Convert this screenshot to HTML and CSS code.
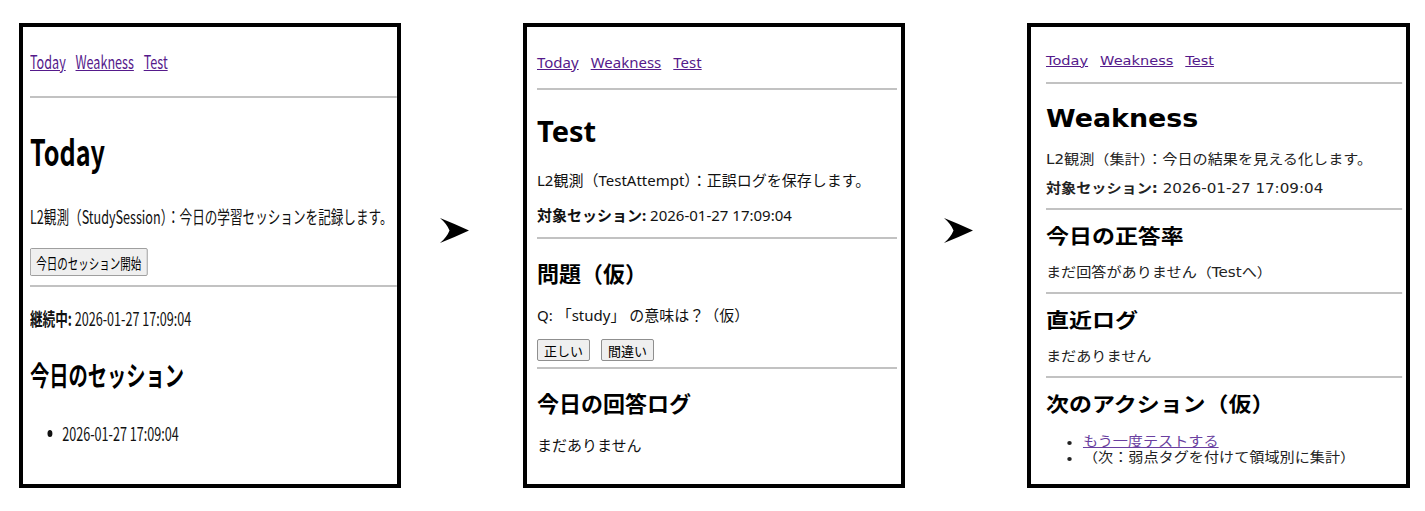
FILE: index.html
```html
<!DOCTYPE html>
<html lang="ja">
<head>
<meta charset="utf-8">
<title>L2観測</title>
<link rel="stylesheet" href="styles.css">
</head>
<body>
<div class="flow">
  <section class="panel panel-today">
    <div class="page page-today">
      <nav class="nav"><a href="#">Today</a><a href="#">Weakness</a><a href="#">Test</a></nav>
      <hr>
      <h1>Today</h1>
      <p>L2観測（StudySession）：今日の学習セッションを記録します。</p>
      <div class="actions"><button class="btn" type="button">今日のセッション開始</button></div>
      <hr>
      <p><strong>継続中:</strong> 2026-01-27 17:09:04</p>
      <h2>今日のセッション</h2>
      <ul class="list"><li>2026-01-27 17:09:04</li></ul>
    </div>
  </section>

  <div class="arrow">
    <svg viewBox="0 0 29 25" aria-hidden="true"><path d="M0 0 Q15 6 29 12.5 Q15 19 0 25 Q7 19 9.5 12.5 Q7 6 0 0 Z" fill="#000"/></svg>
  </div>

  <section class="panel panel-test">
    <div class="page page-test">
      <nav class="nav"><a href="#">Today</a><a href="#">Weakness</a><a href="#">Test</a></nav>
      <hr>
      <h1>Test</h1>
      <p>L2観測（TestAttempt）：正誤ログを保存します。</p>
      <p><strong>対象セッション:</strong> 2026-01-27 17:09:04</p>
      <hr>
      <h2>問題（仮）</h2>
      <p>Q: 「study」 の意味は？（仮）</p>
      <div class="actions"><button class="btn" type="button">正しい</button><button class="btn" type="button">間違い</button></div>
      <hr>
      <h2>今日の回答ログ</h2>
      <p>まだありません</p>
    </div>
  </section>

  <div class="arrow">
    <svg viewBox="0 0 29 25" aria-hidden="true"><path d="M0 0 Q15 6 29 12.5 Q15 19 0 25 Q7 19 9.5 12.5 Q7 6 0 0 Z" fill="#000"/></svg>
  </div>

  <section class="panel panel-weak">
    <div class="page page-weak">
      <nav class="nav"><a href="#">Today</a><a href="#">Weakness</a><a href="#">Test</a></nav>
      <hr>
      <h1>Weakness</h1>
      <p>L2観測（集計）：今日の結果を見える化します。</p>
      <p><strong>対象セッション:</strong> 2026-01-27 17:09:04</p>
      <hr>
      <h2>今日の正答率</h2>
      <p>まだ回答がありません（Testへ）</p>
      <hr>
      <h2>直近ログ</h2>
      <p>まだありません</p>
      <hr>
      <h2>次のアクション（仮）</h2>
      <ul class="list"><li><a href="#">もう一度テストする</a></li><li>（次：弱点タグを付けて領域別に集計）</li></ul>
    </div>
  </section>
</div>
</body>
</html>
```

FILE: styles.css
```css
* { box-sizing: border-box; }

html, body {
  margin: 0;
  background: #fff;
}

body {
  font-family: "Noto Sans", "Noto Sans CJK JP", sans-serif;
  color: #111;
}

.flow {
  display: flex;
  align-items: flex-start;
  padding: 23px 0 0 19px;
}

.panel {
  flex: none;
  width: 382px;
  height: 465px;
  border: 4px solid #000;
  overflow: hidden;
  background: #fff;
}

.panel-today { padding-left: 7px; }
.panel-test { padding-left: 10px; padding-right: 4px; }
.panel-weak { width: 383px; padding-left: 15px; padding-right: 4px; }

.arrow {
  flex: none;
  width: 122px;
  padding: 195px 0 0 39px;
}

.arrow svg {
  display: block;
  width: 29px;
  height: 25px;
}

/* shared page elements */
.page { transform-origin: 0 0; }
.page h1, .page h2, .page p, .page ul { margin: 0; }
.page h1, .page h2 { font-weight: 700; color: #000; }
.page strong { font-weight: 700; }

.page hr {
  margin: 0;
  height: 0;
  border: 0;
  border-top: 2px solid #c2c2c2;
}

.nav { display: flex; }
.nav a, .list a {
  color: #551a8b;
  text-decoration: underline;
}

.actions { display: flex; }

.btn {
  font-family: inherit;
  color: #000;
  background: #efefef;
  border: 1px solid #8f8f8f;
  border-radius: 2px;
  line-height: 1;
  padding-top: 0;
  padding-bottom: 0;
}

.list { list-style: disc; }

/* ---------- Panel 1: Today (horizontally condensed capture) ---------- */
.page-today {
  width: 524px;
  transform: scaleX(0.7);
  padding-top: 22px;
  font-family: "Noto Sans CJK JP", sans-serif;
  font-size: 18px;
  line-height: 24px;
}
.page-today .nav { gap: 14px; }
.page-today .nav + hr { margin-top: 23px; }
.page-today h1 { font-size: 36px; line-height: 44px; margin-top: 30px; }
.page-today h1 + p { margin-top: 32px; }
.page-today p + .actions { margin-top: 20px; }
.page-today .btn { height: 28px; font-size: 15px; padding-left: 8px; padding-right: 8px; }
.page-today .actions + hr { margin-top: 9px; }
.page-today hr + p { margin-top: 19px; }
.page-today h2 { font-size: 27.5px; line-height: 34px; margin-top: 27px; }
.page-today h2 + .list { margin-top: 30px; padding-left: 46px; }

/* ---------- Panel 2: Test ---------- */
.page-test {
  padding-top: 25px;
  font-size: 15px;
  line-height: 20px;
}
.page-test .nav { gap: 12px; }
.page-test .nav + hr { margin-top: 16px; }
.page-test h1 { font-size: 29px; line-height: 36px; margin-top: 23px; }
.page-test h1 + p { margin-top: 21px; }
.page-test p + p { margin-top: 15px; }
.page-test p + hr { margin-top: 12px; }
.page-test h2 { font-size: 22px; line-height: 30px; margin-top: 19px; }
.page-test h2 + p { margin-top: 17px; }
.page-test p + .actions { margin-top: 14px; gap: 11px; }
.page-test .btn { height: 22px; font-size: 13px; padding-left: 6px; padding-right: 6px; font-family: "Noto Sans CJK JP", sans-serif; }
.page-test .actions + hr { margin-top: 5.5px; }

/* ---------- Panel 3: Weakness (horizontally widened capture) ---------- */
.page-weak {
  width: 318px;
  transform: scaleX(1.12);
  padding-top: 24.5px;
  font-family: "DejaVu Sans", "Noto Sans CJK JP", sans-serif;
  font-size: 13.5px;
  line-height: 18px;
  color: #222;
}
.page-weak .nav { gap: 10.7px; font-size: 13px; }
.page-weak .nav + hr { margin-top: 12.5px; }
.page-weak h1 { font-size: 24px; line-height: 30px; margin-top: 20px; }
.page-weak h1 + p { margin-top: 16px; }
.page-weak p + p { margin-top: 10.5px; }
.page-weak p + hr { margin-top: 11px; }
.page-weak h2 { font-size: 20.5px; line-height: 26px; margin-top: 14.5px; }
.page-weak h2 + p { margin-top: 12.5px; }
.page-weak h2 + .list { margin-top: 15px; padding-left: 33px; }
.page-weak .list li { line-height: 16px; }
.page-weak .list li::marker { font-size: 12px; }
.page-weak .list a { color: #6a3fa0; }
```
